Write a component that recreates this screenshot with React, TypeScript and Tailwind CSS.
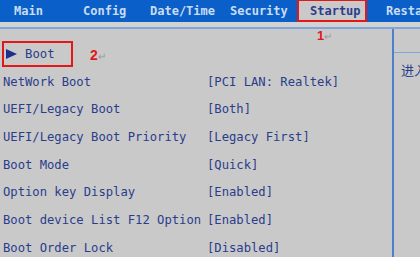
import React from "react";

const rows: [string, string][] = [
  ["NetWork Boot", "[PCI LAN: Realtek]"],
  ["UEFI/Legacy Boot", "[Both]"],
  ["UEFI/Legacy Boot Priority", "[Legacy First]"],
  ["Boot Mode", "[Quick]"],
  ["Option key Display", "[Enabled]"],
  ["Boot device List F12 Option", "[Enabled]"],
  ["Boot Order Lock", "[Disabled]"],
];

export default function App() {
  const mono = { fontFamily: '"DejaVu Sans Mono", "Liberation Mono", monospace' };
  return (
    <div className="w-[420px] h-[257px] overflow-hidden bg-[#c9c9c9] text-[12px] text-[#2a3d8c] relative" style={mono}>
      {/* top tab bar */}
      <div className="h-[22px] bg-[#0a60c8] flex items-stretch text-[12px] font-bold text-[#c9dcf3] whitespace-nowrap overflow-hidden">
        <span className="shrink-0 pl-[14px] w-[83px] flex items-center">Main</span>
        <span className="shrink-0 w-[67px] flex items-center">Config</span>
        <span className="shrink-0 w-[80px] flex items-center">Date/Time</span>
        <span className="shrink-0 w-[67px] flex items-center">Security</span>
        <span className="shrink-0 w-[70px] -mt-px border-2 border-[#e01818] bg-[#c9c9c9] text-[#2a3d8c] flex items-center pl-[11px]">Startup</span>
        <span className="shrink-0 pl-[19px] flex items-center">Restart</span>
      </div>
      <div className="h-[5px] bg-[#d2d2d2]" />
      <div className="h-[2px] bg-[#7fa6dc]" />
      <div className="flex h-[228px]">
        <div className="shrink-0 w-[394px] border-r-2 border-[#4d80c9] relative">
          <span className="absolute left-[317px] top-[1px] text-[13px] font-bold text-[#e01818] leading-[12px]" style={{ fontFamily: '"Liberation Sans", sans-serif' }}>
            1<span className="text-[#9a9a9a] font-normal text-[10px]">↵</span>
          </span>
          <div className="pt-[12px] pl-[2px] flex items-center">
            <div className="w-[71px] h-[26px] border-2 border-[#e01818] flex items-center pl-[2px]">
              <svg width="11" height="10" viewBox="0 0 11 10" className="mr-[8px]">
                <polygon points="0,0 11,5 0,10" fill="#1c2f8c" />
              </svg>
              <span className="text-[12.3px]">Boot</span>
            </div>
            <span className="ml-[17px] mt-[2px] text-[14px] font-bold text-[#e01818]" style={{ fontFamily: '"Liberation Sans", sans-serif' }}>
              2<span className="text-[#9a9a9a] font-normal text-[10px]">↵</span>
            </span>
          </div>
          <div className="flex flex-col text-[12.2px] pt-[1px]">
            {rows.map(([k, v]) => (
              <div key={k} className="h-[27.67px] flex items-center whitespace-nowrap">
                <span className="pl-[3px] w-[207px] shrink-0">{k}</span>
                <span>{v}</span>
              </div>
            ))}
          </div>
        </div>
        <div className="flex-1 min-w-0 flex flex-col overflow-hidden">
          <div className="h-[24px] border-b border-[#7fa6dc]" />
          <div className="pl-[7px] pt-[7px] whitespace-nowrap text-[13px]" style={{ fontFamily: '"Noto Sans CJK SC", sans-serif' }}>进入</div>
        </div>
      </div>
    </div>
  );
}
